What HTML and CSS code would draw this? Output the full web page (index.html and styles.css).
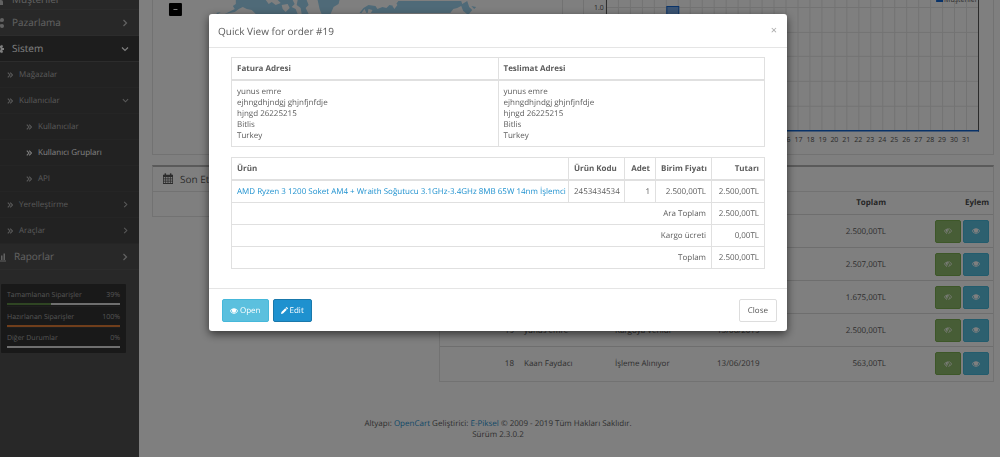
FILE: index.html
```html
<!DOCTYPE html>
<html lang="tr">
<head>
<meta charset="utf-8">
<title>Quick View for order #19</title>
<link rel="stylesheet" href="styles.css">
</head>
<body>
<svg class="sprite" aria-hidden="true">
  <symbol id="right" viewBox="0 0 8 8"><path d="M2.5 1 5.5 4 2.5 7" fill="none" stroke="currentColor" stroke-width="1.2"/></symbol>
  <symbol id="down" viewBox="0 0 8 8"><path d="M1 2.5 4 5.5 7 2.5" fill="none" stroke="currentColor" stroke-width="1.2"/></symbol>
  <symbol id="double" viewBox="0 0 6 6"><path d="M.8.6 3 3 .8 5.4M3.2.6 5.4 3 3.2 5.4" fill="none" stroke="currentColor" stroke-width="1.1"/></symbol>
  <symbol id="eye" viewBox="0 0 18 12"><path fill="currentColor" fill-rule="evenodd" d="M0 6C2 2.500 5.200 0 9 0s7 2.500 9 6c-2 3.500-5.200 6-9 6S2 9.500 0 6zm1.800 0C3.500 8.800 6 10.500 9 10.500S14.500 8.800 16.200 6C15.400 4.700 14.300 3.500 13 2.700A4.600 4.600 0 1 1 5 2.700C3.700 3.500 2.600 4.700 1.800 6zM9 2a2.600 2.600 0 0 0-2.600 2.600h1C7.400 3.600 8 3 9 3z"/><circle cx="9" cy="5" r="4.200" fill="currentColor"/></symbol>
  <symbol id="eye-off" viewBox="0 0 18 14"><path fill="currentColor" fill-rule="evenodd" d="M0 7C2 3.500 5.200 1 9 1l1.500.1L9.700 2.500C6.400 2.200 3.600 4 1.800 7c.8 1.300 1.900 2.400 3.200 3.200l-.7 1.200C2.500 10.400 1 8.800 0 7zM4.400 6.400c0-1.600.6-3 1.800-3.900L9 2.700 5.700 9.500C4.900 8.700 4.400 7.600 4.400 6.400zM11.700 0l1.100.6-7.400 13.200-1.100-.6zM13.600 2.500C15.400 3.500 17 5.100 18 7c-2 3.600-5.200 6-9 6l.8-1.500c2.600-.2 4.900-1.900 6.400-4.500-.8-1.400-1.900-2.500-3.300-3.300zM13.500 5.500c.6 2.400-.6 4.600-2.900 5.300z"/></symbol>
  <symbol id="pencil" viewBox="0 0 14 14"><path fill="currentColor" d="M0 14 .9 10 8.500 2.400l3.100 3.100L4 13.100zM9.300 1.600 10.500.4q.6-.6 1.300 0l1.800 1.800q.6.600 0 1.300l-1.200 1.200z"/></symbol>
  <symbol id="calendar" viewBox="0 0 13 14"><path fill="currentColor" fill-rule="evenodd" d="M0 2h2V.5Q3 -.4 4 .5V2h5V.5Q10 -.4 11 .5V2h2v12H0zM1 5v2h2V5zm3 0v2h2V5zm3 0v2h2V5zm3 0v2h2V5zM1 8v2h2V8zm3 0v2h2V8zm3 0v2h2V8zm3 0v2h2V8zM1 11v2h2v-2zm3 0v2h2v-2zm3 0v2h2v-2zm3 0v2h2v-2z"/></symbol>
  <symbol id="share" viewBox="0 0 10 10"><path d="M8 2 2 5l6 3" fill="none" stroke="currentColor" stroke-width="1.300"/><circle cx="8" cy="2" r="2" fill="currentColor"/><circle cx="2" cy="5" r="2" fill="currentColor"/><circle cx="8" cy="8" r="2" fill="currentColor"/></symbol>
  <symbol id="gear" viewBox="0 0 10 10"><circle cx="5" cy="5" r="2.700" fill="none" stroke="currentColor" stroke-width="2"/><path d="M5 0v2M5 8v2M0 5h2M8 5h2M1.500 1.500l1.300 1.300M7.200 7.200l1.300 1.300M8.500 1.500 7.200 2.800M2.800 7.200 1.500 8.500" stroke="currentColor" stroke-width="1.800"/></symbol>
  <symbol id="bars" viewBox="0 0 12 9"><path fill="currentColor" d="M0 0h1v8h11v1H0zM2 4h1.500v3.500H2zM4.500 2H6v5.500H4.500zM7 3h1.500v4.500H7zM9.500 1H11v6.500H9.500z"/></symbol>
  <symbol id="user" viewBox="0 0 10 10"><path fill="currentColor" d="M1 10V7q0-2 2-2h4q2 0 2 2v3z"/><circle cx="5" cy="3" r="2.500" fill="currentColor"/></symbol>
</svg>

<div class="page">
  <aside class="sidebar">
    <nav>
      <a class="item cut" href="#"><svg class="glyph"><use href="#user"/></svg><span>Müşteriler</span></a>
      <a class="item" href="#"><svg class="glyph"><use href="#share"/></svg><span>Pazarlama</span><svg class="arrow"><use href="#right"/></svg></a>
      <a class="item open" href="#"><svg class="glyph"><use href="#gear"/></svg><span>Sistem</span><svg class="arrow"><use href="#down"/></svg></a>
      <div class="submenu">
        <a class="item sub" href="#"><svg class="double"><use href="#double"/></svg><span>Mağazalar</span></a>
        <a class="item sub" href="#"><svg class="double"><use href="#double"/></svg><span>Kullanıcılar</span><svg class="arrow small"><use href="#down"/></svg></a>
        <a class="item leaf" href="#"><svg class="double"><use href="#double"/></svg><span>Kullanıcılar</span></a>
        <a class="item leaf active" href="#"><svg class="double"><use href="#double"/></svg><span>Kullanıcı Grupları</span></a>
        <a class="item leaf" href="#"><svg class="double"><use href="#double"/></svg><span>API</span></a>
        <a class="item sub" href="#"><svg class="double"><use href="#double"/></svg><span>Yerelleştirme</span><svg class="arrow small"><use href="#right"/></svg></a>
        <a class="item sub" href="#"><svg class="double"><use href="#double"/></svg><span>Araçlar</span><svg class="arrow small"><use href="#right"/></svg></a>
      </div>
      <a class="item reports" href="#"><svg class="glyph"><use href="#bars"/></svg><span>Raporlar</span><svg class="arrow"><use href="#right"/></svg></a>
    </nav>
    <ul class="stats">
      <li><div class="stat"><span>Tamamlanan Siparişler</span><span>39%</span></div><div class="track"><div class="fill green" style="width:39%"></div></div></li>
      <li><div class="stat"><span>Hazırlanan Siparişler</span><span>100%</span></div><div class="track"><div class="fill orange" style="width:100%"></div></div></li>
      <li><div class="stat"><span>Diğer Durumlar</span><span>0%</span></div><div class="track"><div class="fill" style="width:0%"></div></div></li>
    </ul>
  </aside>

  <main class="content">
    <div class="row halves">
      <section class="panel flush">
        <svg class="drawing" viewBox="153 0 410 154">
          <g fill="#9fd5f1">
            <path d="M236 0h57l2 4-3 3 4 2 2 5h-42l-4-4-5-1-4-2-4 2-4 3-10 2 10-5-2-3 3-2z"/>
            <path d="M298 0h9l2 5-3 3 3 6h-7l-1-6-4-3zM318 0h22l-1 4-5 3-3 7h-9l-2-5z"/>
            <path d="M360 13l4-5 5-3 7 1 2 3 5-2 4 1 3-3 5 1 4-5h63l1 3 5-3 2 6 3 3-4 5-5-4-2-5-4 2-4 1-3 4h-84l-2-4-3 4z"/>
            <path d="M472 6l5 1-2 2zM216 13l5-1-3 2z"/>
          </g>
          <g fill="#fff"><path d="M266 0h12l3 3-5 2-4-3-3 2zM282 5l6-1 2 4-4 4-3-3zM369 9l4 1-2 4h-3zM396 2l2 3-3 4-2-3z"/></g>
          <rect x="169" y="3" width="13" height="13" rx="1"/>
          <path d="M173.500 9.500h4" stroke="#fff"/>
        </svg>
      </section>
      <section class="panel flush">
        <svg class="drawing chart" viewBox="584 0 410 154">
          <path class="gridline" d="M606 7.500H979M606 32.500H979M606 56.500H979M606 81.500H979M606 106.500H979M618.500 0V131M630.500 0V131M642.500 0V131M654.500 0V131M666.500 0V131M678.500 0V131M690.500 0V131M702.500 0V131M714.500 0V131M726.500 0V131M738.500 0V131M750.500 0V131M762.500 0V131M774.500 0V131M786.500 0V131M798.500 0V131M810.500 0V131M822.500 0V131M835.500 0V131M847.500 0V131M859.500 0V131M871.500 0V131M883.500 0V131M895.500 0V131M907.500 0V131M919.500 0V131M931.500 0V131M943.500 0V131M955.500 0V131M967.500 0V131"/>
          <rect x="667" y="6.500" width="12" height="124" fill="#76a9e8" stroke="#1065d2"/>
          <path d="M606.500 0V131M979.500 0V132" stroke="#545454"/>
          <path d="M606 131H980" stroke="#1065d2" stroke-width="1.500"/>
          <rect x="937" y="-4" width="7" height="6" fill="#1065d2"/>
          <text x="945" y="2">Müşteriler</text>
          <text x="594" y="10">1.0</text>
          <g text-anchor="middle">
            <text x="787" y="142">16</text><text x="799" y="142">17</text><text x="811" y="142">18</text><text x="823" y="142">19</text><text x="835" y="142">20</text><text x="847" y="142">21</text><text x="859" y="142">22</text><text x="871" y="142">23</text><text x="883" y="142">24</text><text x="895" y="142">25</text><text x="907" y="142">26</text><text x="919" y="142">27</text><text x="931" y="142">28</text><text x="943" y="142">29</text><text x="955" y="142">30</text><text x="967" y="142">31</text>
          </g>
        </svg>
      </section>
    </div>
    <div class="row thirds">
      <section class="panel">
        <h3 class="panel-title"><svg class="calendar"><use href="#calendar"/></svg>Son Etkinlikler</h3>
        <div class="panel-body"></div>
      </section>
      <section class="panel">
        <h3 class="panel-title"></h3>
        <table class="orders">
          <colgroup><col class="c-id"><col class="c-name"><col class="c-status"><col class="c-date"><col class="c-total"><col></colgroup>
          <thead><tr><th></th><th></th><th></th><th></th><th class="num">Toplam</th><th class="num">Eylem</th></tr></thead>
          <tbody>
            <tr><td></td><td></td><td></td><td></td><td class="num">2.500,00TL</td><td><div class="actions"><button class="btn green" aria-label="Gizle"><svg><use href="#eye-off"/></svg></button><button class="btn info" aria-label="Göster"><svg><use href="#eye"/></svg></button></div></td></tr>
            <tr><td></td><td></td><td></td><td></td><td class="num">2.507,00TL</td><td><div class="actions"><button class="btn green" aria-label="Gizle"><svg><use href="#eye-off"/></svg></button><button class="btn info" aria-label="Göster"><svg><use href="#eye"/></svg></button></div></td></tr>
            <tr><td></td><td></td><td></td><td></td><td class="num">1.675,00TL</td><td><div class="actions"><button class="btn green" aria-label="Gizle"><svg><use href="#eye-off"/></svg></button><button class="btn info" aria-label="Göster"><svg><use href="#eye"/></svg></button></div></td></tr>
            <tr><td class="num">19</td><td>yunus emre</td><td>Kargoya Verildi</td><td>13/06/2019</td><td class="num">2.500,00TL</td><td><div class="actions"><button class="btn green" aria-label="Gizle"><svg><use href="#eye-off"/></svg></button><button class="btn info" aria-label="Göster"><svg><use href="#eye"/></svg></button></div></td></tr>
            <tr><td class="num">18</td><td>Kaan Faydacı</td><td>İşleme Alınıyor</td><td>13/06/2019</td><td class="num">563,00TL</td><td><div class="actions"><button class="btn green" aria-label="Gizle"><svg><use href="#eye-off"/></svg></button><button class="btn info" aria-label="Göster"><svg><use href="#eye"/></svg></button></div></td></tr>
          </tbody>
        </table>
      </section>
    </div>
    <footer class="footer">Altyapı: <a href="#">OpenCart</a> Geliştirici: <a href="#">E-Piksel</a> © 2009 - 2019 Tüm Hakları Saklıdır.<br>Sürüm 2.3.0.2</footer>
  </main>
</div>

<div class="backdrop">
  <div class="modal" role="dialog" aria-labelledby="title">
    <header class="modal-head">
      <h4 id="title">Quick View for order #19</h4>
      <button class="dismiss" aria-label="Close dialog">×</button>
    </header>
    <div class="modal-body">
      <table class="grid addresses">
        <thead><tr><th>Fatura Adresi</th><th>Teslimat Adresi</th></tr></thead>
        <tbody><tr>
          <td>yunus emre<br>ejhngdhjndgj ghjnfjnfdje<br>hjngd 26225215<br>Bitlis<br>Turkey</td>
          <td>yunus emre<br>ejhngdhjndgj ghjnfjnfdje<br>hjngd 26225215<br>Bitlis<br>Turkey</td>
        </tr></tbody>
      </table>
      <table class="grid products">
        <colgroup><col><col class="p-code"><col class="p-qty"><col class="p-unit"><col class="p-sum"></colgroup>
        <thead><tr><th>Ürün</th><th>Ürün Kodu</th><th class="num">Adet</th><th class="num">Birim Fiyatı</th><th class="num">Tutarı</th></tr></thead>
        <tbody>
          <tr><td><a href="#">AMD Ryzen 3 1200 Soket AM4 + Wraith Soğutucu 3.1GHz-3.4GHz 8MB 65W 14nm İşlemci</a></td><td>2453434534</td><td class="num">1</td><td class="num">2.500,00TL</td><td class="num">2.500,00TL</td></tr>
          <tr><td class="num" colspan="4">Ara Toplam</td><td class="num">2.500,00TL</td></tr>
          <tr><td class="num" colspan="4">Kargo ücreti</td><td class="num">0,00TL</td></tr>
          <tr><td class="num" colspan="4">Toplam</td><td class="num">2.500,00TL</td></tr>
        </tbody>
      </table>
    </div>
    <div class="modal-foot">
      <button class="btn text info"><svg><use href="#eye"/></svg>Open</button>
      <button class="btn text primary"><svg class="pencil"><use href="#pencil"/></svg>Edit</button>
      <button class="btn text plain">Close</button>
    </div>
  </div>
</div>
</body>
</html>
```

FILE: styles.css
```css
* { box-sizing: border-box; }
body {
  margin: 0;
  overflow: hidden;
  background: #fff;
  color: #5c5c5c;
  font: 8px/11px "Open Sans", "Noto Sans", sans-serif;
  text-rendering: geometricPrecision;
}
a { color: #1e91cf; text-decoration: none; }
button { font: inherit; cursor: pointer; text-rendering: inherit; }
h3, h4 { margin: 0; font-size: 10px; line-height: 14px; font-weight: 400; }
table { border-collapse: collapse; width: 100%; }
th { text-align: left; font-weight: 700; }
.num { text-align: right; }
.sprite { display: block; width: 0; height: 0; }

.page { display: flex; height: 100vh; overflow: hidden; }

/* Sidebar */
.sidebar { flex: 0 0 139px; background: #515151; overflow: hidden; }
.item {
  display: flex;
  align-items: center;
  height: 26px;
  padding-right: 10px;
  border-bottom: 1px solid #595959;
  color: #c4c4c4;
  font-size: 10px;
}
.item.cut { height: 10px; align-items: flex-end; padding-bottom: 4px; overflow: hidden; }
.item.open { background: #3a3a3a; color: #fff; }
.glyph { width: 10px; height: 10px; margin-left: -6px; margin-right: 8px; flex: none; }
.reports .glyph { width: 12px; }
.arrow { width: 8px; height: 8px; margin-left: auto; }
.submenu { background: #444; }
.submenu .item { border-color: #4b4b4b; color: #b3b3b3; font-size: 8px; }
.item .arrow.small { width: 7px; height: 7px; }
.double { width: 6px; height: 6px; margin: 0 6px 0 7px; flex: none; }
.item.leaf { height: 26px; padding-left: 19px; }
.submenu .item.active { color: #fff; }
.stats {
  margin: 14px 13px 0 1px;
  padding: 0 6px 5px;
  list-style: none;
  background: #323232;
  border-radius: 1px;
  color: #a8a8a8;
  font-size: 7px;
}
.stats li { padding-top: 6px; height: 22px; }
.stats li + li { padding-top: 5px; height: 21px; border-top: 1px solid #3c3c3c; }
.stat { display: flex; justify-content: space-between; }
.track { height: 2px; margin-top: 2px; background: #dedede; }
.fill { height: 2px; }
.fill.green { background: #5f8b46; }
.fill.orange { background: #e07c37; }

/* Dashboard */
.content { flex: 1; min-width: 0; padding: 0 6px 0 13px; }
.row { display: grid; gap: 20px; margin-bottom: 10px; }
.halves { grid-template-columns: 1fr 1fr; }
.thirds { grid-template-columns: 267fr 555fr; align-items: start; }
.panel { border: 1px solid #e4e4e4; border-top: 2px solid #b4b4b4; min-width: 0; }
.panel.flush { border-top: 0; }
.drawing { display: block; width: 100%; }
.chart text { font-size: 7px; fill: #545454; }
.gridline { stroke: #e6e6e6; fill: none; }
.panel-title {
  display: flex;
  align-items: center;
  gap: 7px;
  height: 25px;
  padding-left: 10px;
  border-bottom: 1px solid #e4e4e4;
  color: #595959;
}
.calendar { width: 10px; height: 11px; }
.panel-body { height: 24px; }
.orders { table-layout: fixed; }
.orders th { height: 23px; padding: 0 5px; color: #4c4c4c; }
.orders td { height: 33px; padding: 0 5px; border-top: 1px solid #dcdcdc; }
.orders tr > :last-child { padding-right: 4px; }
.orders tr:last-child td { height: 34px; }
.c-id { width: 79px; }
.c-name { width: 91px; }
.c-status { width: 102px; }
.c-date { width: 76px; }
.c-total { width: 103px; }
.actions { display: flex; justify-content: flex-end; gap: 2px; }
.footer { margin: 36px 0 0 -152px; padding-left: 2px; text-align: center; }

/* Buttons */
.btn {
  display: inline-flex;
  align-items: center;
  justify-content: center;
  width: 26px;
  height: 23px;
  padding: 0;
  border: 1px solid;
  border-radius: 2px;
  color: #fff;
}
.btn svg { width: 8px; height: 6px; }
.btn.green { background: #8fbb6c; border-color: #7aae50; }
.btn.info { background: #5bc0de; border-color: #46b8da; }
.btn.primary { background: #1e91cf; border-color: #1978ab; }
.btn.plain { background: #fff; border-color: #ddd; color: #555; margin-left: auto; padding: 0 8px; }
.btn.text { width: auto; padding: 0 7px; gap: 2px; }
.btn.text.plain { padding: 0 8px; }
.btn .pencil { width: 7px; height: 7px; }

/* Dialog */
.backdrop {
  position: fixed;
  inset: 0;
  padding: 14px 4px 0 0;
  background: rgba(0, 0, 0, .5);
}
.modal {
  max-width: 578px;
  margin: 0 auto;
  background: #fff;
  border-radius: 3px;
  box-shadow: 0 3px 10px rgba(0, 0, 0, .6);
}
.modal-head {
  display: flex;
  justify-content: space-between;
  padding: 10px 10px 9px 9px;
  border-bottom: 1px solid #e5e5e5;
}
.dismiss { padding: 0; border: 0; background: none; color: #aaa; font-size: 11px; line-height: 10px; }
.modal-body { padding: 9px 22px 19px; }
.grid { border: 1px solid #e0e0e0; }
.grid + .grid { margin-top: 10px; }
.grid th, .grid td { padding: 5px; border: 1px solid #e0e0e0; white-space: nowrap; }
.grid th { border-bottom-width: 2px; }
.addresses { table-layout: fixed; }
.products { table-layout: fixed; }
.p-code { width: 56px; }
.p-qty { width: 31px; }
.p-unit { width: 56px; }
.p-sum { width: 53px; }
.modal-foot { display: flex; gap: 4px; padding: 10px 10px 9px 13px; border-top: 1px solid #e5e5e5; }
```
